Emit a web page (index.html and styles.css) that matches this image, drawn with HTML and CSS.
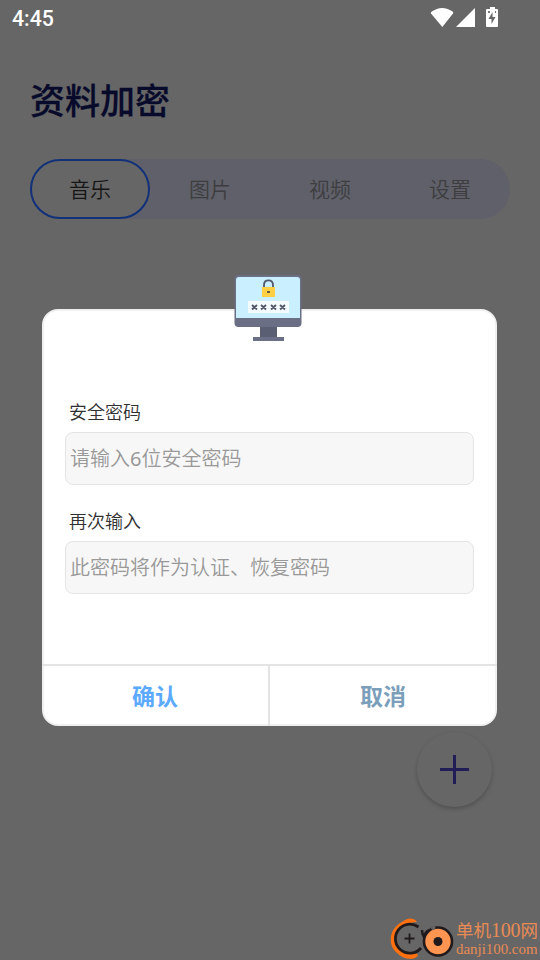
FILE: index.html
```
<!DOCTYPE html>
<html lang="zh-CN">
<head>
<meta charset="utf-8">
<title>资料加密</title>
<link rel="stylesheet" href="styles.css">
</head>
<body>
<div class="screen">
  <header class="status">
    <span class="clock">4:45</span>
    <svg class="status-icons" width="68" height="24" viewBox="0 0 68 24" fill="#fff">
      <path d="M1 9.500Q0.600 8.500 1.500 7.800Q12 0.200 23 7.800Q23.400 8.500 23 9.500L12.300 23Z"/>
      <path d="M45 4V23H26Z"/>
      <path fill-rule="evenodd" d="M60 3H65V5H67Q68 5 68 6V22Q68 23 67 23H57Q56 23 56 22V6Q56 5 57 5H60ZM62.500 8L58.500 15H61.500V20L65.500 13H62.500Z"/>
      <path d="M58 7H60V9H58ZM65 7H66V9H65Z" fill="#777"/>
    </svg>
  </header>
  <h1>资料加密</h1>
  <nav class="tabs">
    <span class="tab active">音乐</span>
    <span class="tab">图片</span>
    <span class="tab">视频</span>
    <span class="tab">设置</span>
  </nav>
  <section class="dialog">
    <svg class="monitor" width="70" height="68" viewBox="0 0 70 68">
      <rect x="1.500" y="1" width="67" height="52" rx="4" fill="#6b6f86"/>
      <path d="M3 44V6Q3 3 6 3H64Q67 3 67 6V44Z" fill="#caf0ff"/>
      <path d="M27 53H44V63H51V67H20V63H27Z" fill="#6b6f86"/>
      <path d="M27 53H44V63H27Z" fill="#5b5f74"/>
      <path d="M31 14V11Q31 6.300 35.500 6.300Q40 6.300 40 11V14" fill="none" stroke="#53576b" stroke-width="1.800"/>
      <rect x="29" y="13" width="13" height="10" fill="#ffd044"/>
      <rect x="34" y="17" width="3" height="2" fill="#6b5d3c"/>
      <rect x="15" y="27" width="41" height="12" fill="#f4fbff"/>
      <path d="M19 31l5 4.500m0-4.500l-5 4.500M28 31l5 4.500m0-4.500l-5 4.500M38 31l5 4.500m0-4.500l-5 4.500M47 31l5 4.500m0-4.500l-5 4.500" stroke="#53576b" stroke-width="1.900"/>
    </svg>
    <div class="form">
      <label>安全密码</label>
      <div class="field">请输入<span class="digit">6</span>位安全密码</div>
      <label>再次输入</label>
      <div class="field">此密码将作为认证、恢复密码</div>
    </div>
    <div class="actions">
      <div class="action confirm">确认</div>
      <div class="action cancel">取消</div>
    </div>
  </section>
  <div class="fab">
    <svg width="29" height="29" viewBox="0 0 29 29"><path d="M14.500 0V29M0 14.500H29" stroke="#211d56" stroke-width="3"/></svg>
  </div>
  <footer class="brand">
    <svg width="66" height="42" viewBox="0 0 66 42">
      <path d="M28 4C24 -1 18 0 13 4C-1 11-1 28 8 35C14 41 23 43 29 38L28 35.500C18 38 6 32 6 20C6 12 11 5 28 4Z" fill="#ff7110"/>
      <path d="M29.500 9A14.500 14.500 0 1 0 32 30" fill="none" stroke="#211a1c" stroke-width="2.800"/>
      <path d="M33 12Q33 16 35 19Q36 14 40 12" fill="none" stroke="#211a1c" stroke-width="2.500"/>
      <path d="M20.500 15.500V25.500M15.500 20.500H25.500" stroke="#211a1c" stroke-width="1.800"/>
      <circle cx="49" cy="23.500" r="14" fill="#ff9550" stroke="#211a1c" stroke-width="2.600"/>
      <path d="M42.500 11L46 9" stroke="#666" stroke-width="3"/>
      <circle cx="49" cy="23.500" r="4.500" fill="#211a1c"/>
    </svg>
    <div class="brand-text"><span class="brand-name">单机<span class="brand-num">100</span>网</span><span class="brand-url">danji100.com</span></div>
  </footer>
</div>
</body>
</html>
```
FILE: styles.css
```
* { box-sizing: border-box; }
body { margin: 0; font-family: "Noto Sans CJK SC", sans-serif; }
svg { display: block; }
.screen { position: relative; width: 540px; height: 960px; overflow: hidden; background: #666; }
.status { height: 38px; padding: 4px 42px 0 12px; display: flex; justify-content: space-between; color: #fff; }
.clock { font: 500 21.3px/30px Roboto, sans-serif; }
h1 { margin: 36px 0 0 30px; font-size: 35px; line-height: 50px; font-weight: 500; color: #080a2b; -webkit-text-stroke: .3px #080a2b; }
.tabs { display: flex; width: 480px; height: 60px; margin: 35px 0 0 30px; border-radius: 30px; background: #5f6069; }
.tab { flex: 0 0 120px; border-radius: 30px; font-size: 21px; line-height: 58px; text-align: center; font-weight: 350; color: #3d3d3f; }
.tab.active { background: #666; border: 2px solid #123178; line-height: 54px; color: #161616; }
.dialog { position: absolute; left: 42px; top: 309px; width: 455px; height: 417px; display: flex; flex-direction: column; background: #fff; border: 2px solid #f0f0f0; border-radius: 16px; }
.monitor { position: absolute; left: 189px; top: -37px; }
.form { flex: 1; padding: 87px 21px 0; }
.form label { display: block; height: 26px; margin: 0 0 8px 4px; font-size: 18px; line-height: 26px; font-weight: 350; color: #303030; }
.field { height: 53px; margin-bottom: 22px; padding: 0 4px; border: 1px solid #e4e4e4; border-radius: 8px; background: #f7f7f7; color: #999; font-family: "Noto Sans", "Noto Sans CJK SC", sans-serif; font-size: 20px; line-height: 51px; font-weight: 350; }
.digit { font-weight: 400; }
.actions { display: flex; height: 62px; margin: 0 -2px -2px; border-top: 2px solid #e4e4e4; }
.action { flex: 1; font-size: 23px; line-height: 59px; font-weight: 700; text-align: center; }
.confirm { flex: 0 0 228px; color: #5baaff; border-right: 2px solid #e4e4e4; }
.cancel { padding-right: 1px; color: #7b9eba; }
.fab { position: absolute; left: 417px; top: 732px; width: 75px; height: 75px; display: flex; align-items: center; justify-content: center; border-radius: 50%; background: #666; box-shadow: 0 2px 4px rgba(0,0,0,.22); }
.brand { position: absolute; left: 389px; top: 918px; display: flex; color: #e98b55; }
.brand-text { display: flex; flex-direction: column; padding-left: 1px; }
.brand-name { font-size: 17.500px; line-height: 24px; font-weight: 400; white-space: nowrap; }
.brand-num { font: 20px/20px "Liberation Serif", serif; letter-spacing: -.2px; }
.brand-url { font: 14.900px/15px "Liberation Serif", serif; }
```
